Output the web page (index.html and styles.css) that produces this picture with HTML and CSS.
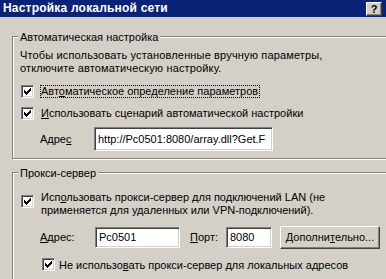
FILE: index.html
```
<!DOCTYPE html>
<html lang="ru">
<head>
  <meta charset="UTF-8">
  <title>Настройка локальной сети</title>
  <link rel="stylesheet" href="styles.css">
</head>
<body>
  <div class="window">
    <div class="titlebar">
      <span class="title">Настройка локальной сети</span>
      <span class="help-btn">?</span>
    </div>

    <!-- automatic configuration -->
    <div class="group group-auto">
      <span class="legend">Автоматическая настройка</span>
      <div class="desc">Чтобы использовать установленные вручную параметры,<br>отключите автоматическую настройку.</div>
      <div class="check-row row-detect">
        <span class="check"><svg width="7" height="7" viewBox="0 0 7 7" shape-rendering="crispEdges"><path d="M6 0h1v3h-1zM5 1h1v3h-1zM4 2h1v3h-1zM0 2h1v3h-1zM1 3h1v3h-1zM2 4h1v3h-1zM3 3h1v3h-1z"/></svg></span>
        <span class="label focused">Авт<u>о</u>матическое определение параметров</span>
      </div>
      <div class="check-row row-script">
        <span class="check"><svg width="7" height="7" viewBox="0 0 7 7" shape-rendering="crispEdges"><path d="M6 0h1v3h-1zM5 1h1v3h-1zM4 2h1v3h-1zM0 2h1v3h-1zM1 3h1v3h-1zM2 4h1v3h-1zM3 3h1v3h-1z"/></svg></span>
        <span class="label"><u>И</u>спользовать сценарий автоматической настройки</span>
      </div>
      <div class="field-row row-url">
        <span class="field-label url-label">Адре<u>с</u></span>
        <span class="input url-input">http://Pc0501:8080/array.dll?Get.F</span>
      </div>
    </div>

    <!-- proxy -->
    <div class="group group-proxy">
      <span class="legend">Прокси-сервер</span>
      <div class="check-row row-proxy">
        <span class="check"><svg width="7" height="7" viewBox="0 0 7 7" shape-rendering="crispEdges"><path d="M6 0h1v3h-1zM5 1h1v3h-1zM4 2h1v3h-1zM0 2h1v3h-1zM1 3h1v3h-1zM2 4h1v3h-1zM3 3h1v3h-1z"/></svg></span>
        <span class="label">Исп<u>о</u>льзовать прокси-сервер для подключений LAN (не<br>применяется для удаленных или VPN-подключений).</span>
      </div>
      <div class="field-row row-addr">
        <span class="field-label addr-label"><u>А</u>дрес:</span>
        <span class="input addr-input">Pc0501</span>
        <span class="field-label port-label"><u>П</u>орт:</span>
        <span class="input port-input">8080</span>
        <span class="button">Дополни<u>т</u>ельно...</span>
      </div>
      <div class="check-row row-local">
        <span class="check"><svg width="7" height="7" viewBox="0 0 7 7" shape-rendering="crispEdges"><path d="M6 0h1v3h-1zM5 1h1v3h-1zM4 2h1v3h-1zM0 2h1v3h-1zM1 3h1v3h-1zM2 4h1v3h-1zM3 3h1v3h-1z"/></svg></span>
        <span class="label">Не использо<u>в</u>ать прокси-сервер для локальных адресов</span>
      </div>
    </div>
  </div>
</body>
</html>
```

FILE: styles.css
```
body {
  margin: 0;
  background-color: #d4d0c8;
}

.window {
  width: 386px;
  height: 279px;
  overflow: hidden;
  background-color: #d4d0c8;
  font-family: 'Liberation Sans', Arial, sans-serif;
  font-size: 11px;
  line-height: 13px;
  color: #000;
}

.titlebar {
  height: 17px;
  background-color: #0b2376;
  display: flex;
  align-items: center;
  justify-content: space-between;
  padding: 0 4px 0 3px;
}

.title {
  color: #fff;
  font-weight: bold;
  font-size: 12px;
  letter-spacing: 0.2px;
}

.help-btn {
  width: 14px;
  height: 12px;
  background-color: #d4d0c8;
  border: 1px solid;
  border-color: #fff #404040 #404040 #fff;
  box-shadow: inset -1px -1px 0 #808080;
  font-weight: bold;
  font-size: 11px;
  line-height: 12px;
  text-align: center;
}

.group {
  display: flex;
  flex-direction: column;
  align-items: flex-start;
  margin-left: 12px;
  width: 380px;
  padding-left: 7px;
  border: 1px solid #808080;
  box-shadow: inset 1px 1px 0 #fff, 1px 1px 0 #fff;
}

.group-auto {
  margin-top: 19px;
  padding-bottom: 7px;
}

.group-proxy {
  margin-top: 13px;
  padding-bottom: 10px;
}

.legend {
  margin-top: -6px;
  margin-left: -2px;
  padding: 0 2px;
  background-color: #d4d0c8;
}

.desc {
  margin-top: 5px;
  letter-spacing: 0.15px;
}

.check-row {
  display: flex;
  align-items: flex-start;
}

.check {
  width: 9px;
  height: 9px;
  margin-left: 1px;
  border: 1px solid;
  border-color: #808080 #fff #fff #808080;
  box-shadow: inset 1px 1px 0 #404040, inset -1px -1px 0 #d4d0c8;
  background-color: #fff;
  padding: 1px;
  display: flex;
  align-items: center;
  justify-content: center;
}

.check svg {
  display: block;
}

.label {
  margin-left: 6px;
  border: 1px solid transparent;
  padding: 0 1px 0 0;
}

.label.focused {
  border: 1px dotted #000;
  line-height: 11px;
}

.row-detect {
  margin-top: 10px;
}

.row-script {
  margin-top: 9px;
}

.row-script .label {
  margin-top: -1px;
}

.field-row {
  display: flex;
  align-items: center;
}

.row-url {
  margin-top: 6px;
}

.field-label {
  flex-shrink: 0;
}

.url-label {
  width: 54px;
  margin-left: 20px;
}

.input {
  height: 19px;
  box-sizing: border-box;
  border: 1px solid;
  border-color: #808080 #fff #fff #808080;
  box-shadow: inset 1px 1px 0 #404040, inset -1px -1px 0 #d4d0c8;
  background-color: #fff;
  padding: 0 3px;
  white-space: nowrap;
  overflow: hidden;
  display: flex;
  align-items: center;
}

.url-input {
  width: 179px;
  height: 24px;
}

.row-proxy {
  margin-top: 10px;
}

.row-proxy .check {
  margin-top: 5px;
}

.row-addr {
  margin-top: 8px;
}

.addr-label {
  width: 55px;
  margin-left: 20px;
}

.addr-input {
  width: 85px;
  height: 21px;
}

.port-label {
  width: 36px;
  margin-left: 10px;
}

.port-input {
  width: 46px;
  height: 21px;
}

.button {
  width: 100px;
  height: 23px;
  box-sizing: border-box;
  margin-left: 8px;
  border: 1px solid;
  border-color: #fff #404040 #404040 #fff;
  box-shadow: inset -1px -1px 0 #808080;
  display: flex;
  align-items: center;
  justify-content: center;
  white-space: nowrap;
}

.row-local {
  margin-top: 9px;
  margin-left: 21px;
}

.row-local .label {
  margin-left: 3px;
}
```
